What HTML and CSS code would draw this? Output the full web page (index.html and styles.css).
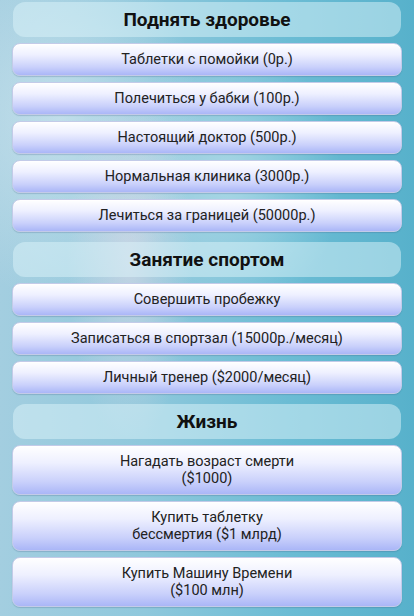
FILE: index.html
```html
<!DOCTYPE html>
<html lang="ru">
<head>
<meta charset="utf-8">
<link rel="stylesheet" href="styles.css">
</head>
<body>
<main class="menu">
  <h2 class="section">Поднять здоровье</h2>
  <button class="btn">Таблетки с помойки (0р.)</button>
  <button class="btn">Полечиться у бабки (100р.)</button>
  <button class="btn">Настоящий доктор (500р.)</button>
  <button class="btn">Нормальная клиника (3000р.)</button>
  <button class="btn">Лечиться за границей (50000р.)</button>

  <h2 class="section section-next">Занятие спортом</h2>
  <button class="btn">Совершить пробежку</button>
  <button class="btn">Записаться в спортзал (15000р./месяц)</button>
  <button class="btn">Личный тренер ($2000/месяц)</button>

  <h2 class="section section-next">Жизнь</h2>
  <button class="btn btn-tall">Нагадать возраст смерти<br>($1000)</button>
  <button class="btn btn-tall">Купить таблетку<br>бессмертия ($1 млрд)</button>
  <button class="btn btn-tall">Купить Машину Времени<br>($100 млн)</button>
</main>
</body>
</html>
```

FILE: styles.css
```css
html, body {
  margin: 0;
  padding: 0;
  height: 100%;
}

body {
  width: 414px;
  height: 616px;
  overflow: hidden;
  font-family: Roboto, "Noto Sans", "Liberation Sans", sans-serif;
  background:
    radial-gradient(ellipse 90px 260px at 130px 260px, rgba(255, 225, 235, 0.45), rgba(255, 225, 235, 0) 70%),
    radial-gradient(ellipse 160px 200px at 230px 180px, rgba(255, 255, 255, 0.35), rgba(255, 255, 255, 0) 70%),
    radial-gradient(ellipse 200px 260px at 60px 120px, rgba(230, 240, 245, 0.5), rgba(230, 240, 245, 0) 70%),
    linear-gradient(90deg, #a3cee0 0%, #8fc8dc 35%, #6bbcd4 70%, #57b1cb 100%);
}

.menu {
  display: flex;
  flex-direction: column;
  gap: 6px;
  padding: 2px 12px 0 12px;
}

.section {
  box-sizing: border-box;
  margin: 0 1px;
  height: 35px;
  display: flex;
  align-items: center;
  justify-content: center;
  border-radius: 12px;
  background: rgba(220, 243, 250, 0.5);
  font-size: 19px;
  font-weight: 700;
  color: #111;
}

.section-next {
  margin-top: 4px;
}

.btn {
  box-sizing: border-box;
  height: 33px;
  padding: 0;
  margin: 0;
  border: 1px solid #c3cbe8;
  border-radius: 8px;
  background: linear-gradient(180deg, #ffffff 0%, #eef0ff 35%, #c9d0fb 75%, #aab6f7 100%);
  box-shadow: inset 0 1px 0 rgba(255, 255, 255, 0.9), 0 1px 1px rgba(60, 90, 130, 0.25);
  font-family: Roboto, "Noto Sans", "Liberation Sans", sans-serif;
  font-size: 14.5px;
  color: #222;
  line-height: 17px;
  text-align: center;
}

.btn-tall {
  height: 50px;
}
```
